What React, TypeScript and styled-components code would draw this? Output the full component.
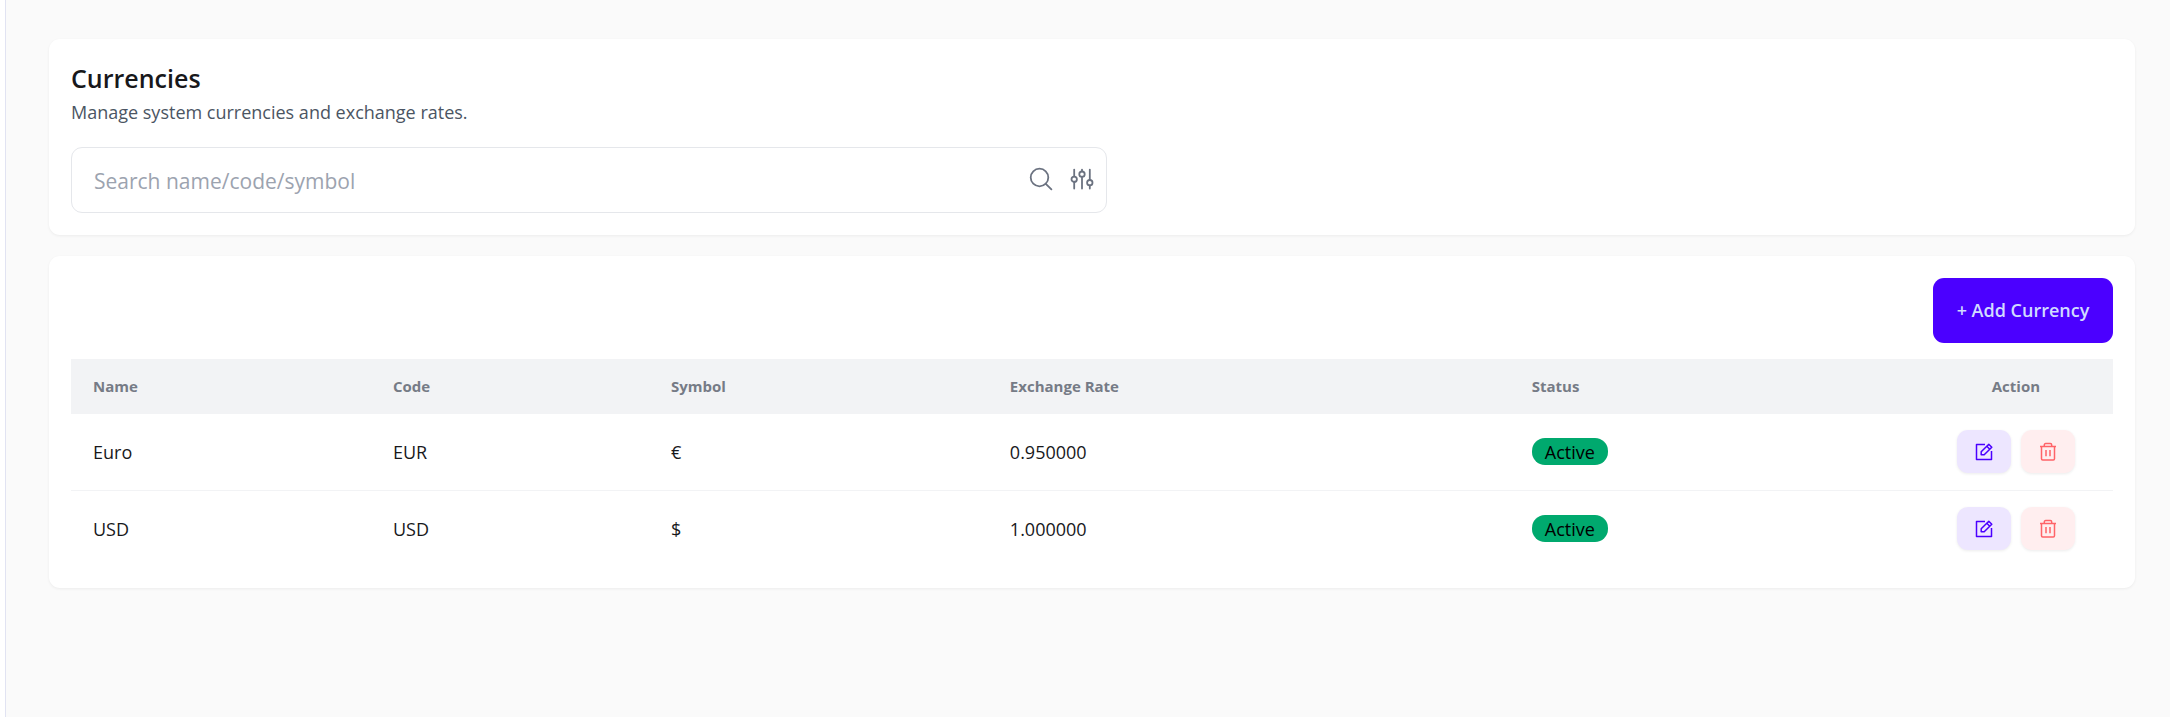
import React from "react";
import styled, { createGlobalStyle } from "styled-components";

const GlobalStyle = createGlobalStyle`
  *, *::before, *::after { box-sizing: border-box; }
  body {
    margin: 0;
    background: #fafafa;
    color: #18181b;
    font-family: "Segoe UI", "Open Sans", "Noto Sans", sans-serif;
    font-size: 18px;
    line-height: 24px;
  }
`;

const Shell = styled.div`
  display: flex;
  min-height: 100vh;
`;

const SidebarEdge = styled.div`
  flex: none;
  width: 6px;
  background: #ffffff;
  border-right: 1px solid #e1e3f2;
`;

const Main = styled.main`
  flex: 1;
  min-width: 0;
  display: flex;
  flex-direction: column;
  gap: 21px;
  padding: 39px 35px 39px 43px;
`;

const Card = styled.section`
  padding: 22px;
  background: #ffffff;
  border-radius: 11px;
  box-shadow: 0 1px 3px rgba(0, 0, 0, 0.06);
`;

const Title = styled.h1`
  margin: 0;
  padding-bottom: 4px;
  font-size: 25px;
  font-weight: 600;
  line-height: 34px;
`;

const Subtitle = styled.p`
  margin: 0 0 22px;
  color: #4b5563;
  font-size: 18px;
  line-height: 26px;
`;

const SearchBox = styled.div`
  display: flex;
  align-items: center;
  gap: 17px;
  max-width: 1036px;
  height: 66px;
  padding: 0 12px 0 22px;
  border: 1px solid #e5e7eb;
  border-radius: 11px;
`;

const SearchInput = styled.input`
  flex: 1;
  min-width: 0;
  border: 0;
  padding: 2px 0 0;
  outline: none;
  background: transparent;
  font: inherit;
  font-size: 21px;
  line-height: 30px;
  color: inherit;
  &::placeholder { color: #9ca3af; opacity: 1; }
`;

const IconButton = styled.button`
  display: flex;
  padding: 0 0 2px;
  border: 0;
  background: transparent;
  color: #6b7280;
  cursor: pointer;
`;

const Toolbar = styled.div`
  display: flex;
  justify-content: flex-end;
  margin-bottom: 16px;
`;

const AddButton = styled.button`
  min-width: 180px;
  height: 65px;
  padding: 0 22px 2px;
  border: 0;
  border-radius: 11px;
  background: #4b00ff;
  color: #d1dbff;
  font: inherit;
  font-size: 18px;
  font-weight: 600;
  cursor: pointer;
`;

const Table = styled.table`
  width: 100%;
  table-layout: fixed;
  border-collapse: separate;
  border-spacing: 0;
`;

const Column = styled.col<{ $share: number }>`
  width: ${(p) => p.$share}%;
`;

const HeadCell = styled.th<{ $center?: boolean }>`
  height: 55px;
  padding: 0 22px 2px;
  background: #f2f3f5;
  color: #767b86;
  font-size: 15px;
  font-weight: 700;
  text-align: ${(p) => (p.$center ? "center" : "left")};
`;

const Cell = styled.td`
  padding: 16px 22px;
`;

const Row = styled.tr`
  &:not(:last-child) ${Cell} {
    padding-bottom: 17px;
    border-bottom: 1px solid #f2f3f5;
  }
`;

const Badge = styled.span`
  display: flex;
  align-items: center;
  width: fit-content;
  height: 27px;
  padding: 0 13px;
  border-radius: 13px;
  background: #00a96e;
  color: #000000;
`;

const Actions = styled.div`
  display: flex;
  justify-content: center;
  gap: 10px;
`;

const ActionButton = styled.button<{ $danger?: boolean }>`
  display: flex;
  align-items: center;
  justify-content: center;
  width: 54px;
  height: 43px;
  padding: 0;
  border: 0;
  border-radius: 11px;
  background: ${(p) => (p.$danger ? "#ffeeef" : "#ede6ff")};
  color: ${(p) => (p.$danger ? "#ff6368" : "#4b00ff")};
  box-shadow: 0 1px 3px rgba(0, 0, 0, 0.08);
  cursor: pointer;
`;

const SearchIcon = () => (
  <svg width="24" height="24" viewBox="0 0 24 24" fill="none" stroke="currentColor" strokeWidth="1.8" strokeLinecap="round">
    <circle cx="10.5" cy="10.5" r="8.8" />
    <path d="M16.8 16.8L22.4 22.4" />
  </svg>
);

const SlidersIcon = () => (
  <svg width="24" height="24" viewBox="0 0 24 24" fill="none" stroke="currentColor" strokeWidth="1.8" strokeLinecap="round">
    <path d="M4.2 2.6V9.3M4.2 14.7V21.6M12 2.6V4.3M12 9.7V21.6M19.8 2.6V13M19.8 18.4V21.6" />
    <circle cx="4.2" cy="12.3" r="2.7" />
    <circle cx="12" cy="7.2" r="2.7" />
    <circle cx="19.8" cy="15.7" r="2.7" />
  </svg>
);

const EditIcon = () => (
  <svg width="20" height="20" viewBox="0 0 20 20" fill="none" stroke="currentColor" strokeWidth="1.5" strokeLinejoin="round">
    <path d="M11 2.5H2.5V17.5H17.5V9" />
    <path d="M7.2 12.8V9.8L14.8 2.2L17.8 5.2L10.2 12.8ZM12.8 4.2L15.8 7.2" />
  </svg>
);

const TrashIcon = () => (
  <svg width="20" height="20" viewBox="0 0 20 20" fill="none" stroke="currentColor" strokeWidth="1.5" strokeLinejoin="round">
    <path d="M2 4.5H18M6.3 4.3V3Q6.3 1.6 7.7 1.6H12.3Q13.7 1.6 13.7 3V4.3M3.5 4.5V16.8Q3.5 18 4.7 18H15.3Q16.5 18 16.5 16.8V4.5M8 8V14.2M12 8V14.2" />
  </svg>
);

const columns = [
  { label: "Name", share: 14.69 },
  { label: "Code", share: 13.61 },
  { label: "Symbol", share: 16.6 },
  { label: "Exchange Rate", share: 25.56 },
  { label: "Status", share: 20.03 },
  { label: "Action", share: 9.51 },
];

const currencies = [
  { name: "Euro", code: "EUR", symbol: "€", rate: "0.950000", status: "Active" },
  { name: "USD", code: "USD", symbol: "$", rate: "1.000000", status: "Active" },
];

export default function App() {
  return (
    <>
      <GlobalStyle />
      <Shell>
        <SidebarEdge />
        <Main>
          <Card>
            <Title>Currencies</Title>
            <Subtitle>Manage system currencies and exchange rates.</Subtitle>
            <SearchBox>
              <SearchInput type="text" aria-label="Search currencies" placeholder="Search name/code/symbol" />
              <IconButton type="button" aria-label="Search"><SearchIcon /></IconButton>
              <IconButton type="button" aria-label="Filters"><SlidersIcon /></IconButton>
            </SearchBox>
          </Card>
          <Card>
            <Toolbar>
              <AddButton type="button">+ Add Currency</AddButton>
            </Toolbar>
            <Table>
              <colgroup>
                {columns.map((c) => <Column key={c.label} $share={c.share} />)}
              </colgroup>
              <thead>
                <tr>
                  {columns.map((c) => (
                    <HeadCell key={c.label} scope="col" $center={c.label === "Action"}>{c.label}</HeadCell>
                  ))}
                </tr>
              </thead>
              <tbody>
                {currencies.map((c) => (
                  <Row key={c.code}>
                    <Cell>{c.name}</Cell>
                    <Cell>{c.code}</Cell>
                    <Cell>{c.symbol}</Cell>
                    <Cell>{c.rate}</Cell>
                    <Cell><Badge>{c.status}</Badge></Cell>
                    <Cell>
                      <Actions>
                        <ActionButton type="button" aria-label={`Edit ${c.name}`}><EditIcon /></ActionButton>
                        <ActionButton type="button" $danger aria-label={`Delete ${c.name}`}><TrashIcon /></ActionButton>
                      </Actions>
                    </Cell>
                  </Row>
                ))}
              </tbody>
            </Table>
          </Card>
        </Main>
      </Shell>
    </>
  );
}
